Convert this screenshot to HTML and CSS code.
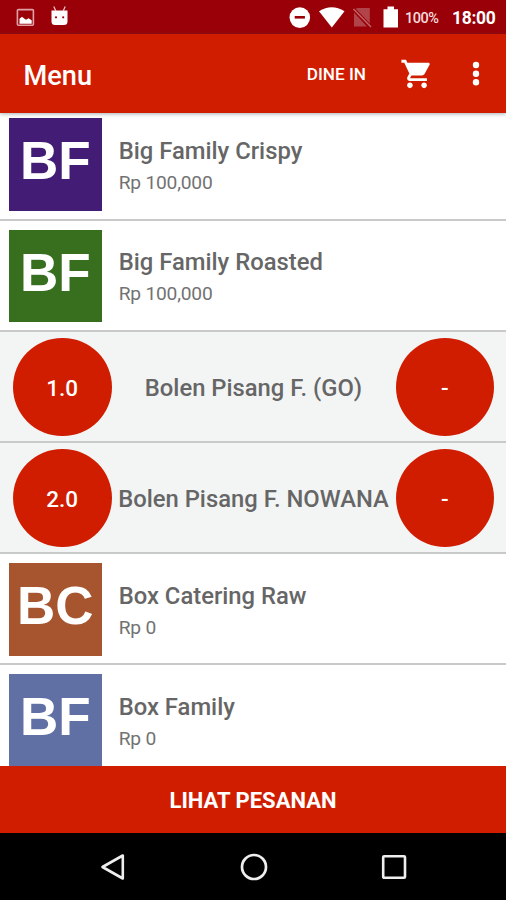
FILE: index.html
```html
<!DOCTYPE html>
<html lang="id">
<head>
<meta charset="utf-8">
<title>Menu</title>
<link rel="stylesheet" href="styles.css">
</head>
<body>
<div class="screen">
  <div class="status">
    <svg class="status-icons" width="506" height="34" viewBox="0 0 506 34" aria-hidden="true">
      <rect x="17.400" y="9.600" width="16" height="15.600" rx="1" fill="none" stroke="#e0a0a5" stroke-width="1.600"/>
      <path d="M19.500 23.800v-5l2.500-2 2.500 2 1.500 1 2.500-1.500 3.200 2v3.500z" fill="#fff"/>
      <path d="M51.500 10.500h16v11a3.500 3.500 0 0 1-3.500 3.500h-9a3.500 3.500 0 0 1-3.500-3.500z" fill="#fff"/>
      <path d="M53.800 6.500l2 4.500M65.200 6.500l-2 4.500" stroke="#f3cdd0" stroke-width="1.200"/>
      <circle cx="56" cy="17.300" r="1.100" fill="#990008"/><circle cx="63.200" cy="17.300" r="1.100" fill="#990008"/>
      <circle cx="299.800" cy="17.600" r="10.300" fill="#fff"/>
      <rect x="294.700" y="16" width="10.200" height="2.600" fill="#990008"/>
      <path d="M319 11.200Q331.800 3.200 344.500 11.200L331.800 27.500z" fill="#fff"/>
      <path d="M358.500 8h11.300v15.500L355.500 8.500zM354 12.500L367 26.500H354z" fill="#b0444a"/>
      <path d="M353.500 9l17.500 18" stroke="#c0656a" stroke-width="1.500"/>
      <path d="M383.500 9.300h4V6.500h6.500v2.800h4V27.600h-14.500z" fill="#fff"/>
    </svg>
    <span class="percent">100%</span>
    <span class="clock">18:00</span>
  </div>
  <header class="appbar">
    <h1 class="title">Menu</h1>
    <span class="mode">DINE IN</span>
    <svg class="cart" width="34" height="34" viewBox="0 0 24 24" fill="#fff"><path d="M7 18c-1.100 0-1.990.9-1.990 2S5.900 22 7 22s2-.9 2-2-.9-2-2-2zM1 2v2h2l3.600 7.590-1.350 2.450c-.16.280-.25.610-.25.960 0 1.100.9 2 2 2h12v-2H7.420c-.14 0-.25-.11-.25-.25l.03-.12.900-1.630h7.450c.75 0 1.410-.41 1.750-1.030l3.580-6.490c.08-.14.12-.31.12-.48 0-.55-.45-1-1-1H5.210l-.94-2H1zm16 16c-1.100 0-1.990.9-1.990 2s.89 2 1.990 2 2-.9 2-2-.9-2-2-2z"/></svg>
    <svg class="more" width="8" height="26" viewBox="0 0 8 26" fill="#fff"><circle cx="4" cy="4" r="3.200"/><circle cx="4" cy="12.700" r="3.200"/><circle cx="4" cy="21.300" r="3.200"/></svg>
  </header>
  <main class="list">
    <div class="row">
      <div class="tile purple">BF</div>
      <div class="info"><div class="name">Big Family Crispy</div><div class="price">Rp 100,000</div></div>
    </div>
    <div class="row">
      <div class="tile green">BF</div>
      <div class="info"><div class="name">Big Family Roasted</div><div class="price">Rp 100,000</div></div>
    </div>
    <div class="row picked">
      <div class="round">1.0</div><div class="name mid">Bolen Pisang F. (GO)</div><div class="round">-</div>
    </div>
    <div class="row picked">
      <div class="round">2.0</div><div class="name mid">Bolen Pisang F. NOWANA</div><div class="round">-</div>
    </div>
    <div class="row">
      <div class="tile brown">BC</div>
      <div class="info"><div class="name">Box Catering Raw</div><div class="price">Rp 0</div></div>
    </div>
    <div class="row">
      <div class="tile blue">BF</div>
      <div class="info"><div class="name">Box Family</div><div class="price">Rp 0</div></div>
    </div>
  </main>
  <div class="order">LIHAT PESANAN</div>
  <nav class="nav">
    <svg width="28" height="30" viewBox="0 0 28 30"><path d="M3.500 15L23.800 3.500V26.500z" fill="none" stroke="#eee" stroke-width="2.600" stroke-linejoin="round"/></svg>
    <svg width="28" height="30" viewBox="0 0 28 30"><circle cx="14" cy="15" r="12" fill="none" stroke="#eee" stroke-width="2.700"/></svg>
    <svg width="28" height="30" viewBox="0 0 28 30"><rect x="3.200" y="4.200" width="21.800" height="21.600" rx="1" fill="none" stroke="#eee" stroke-width="2.600"/></svg>
  </nav>
</div>
</body>
</html>
```
FILE: styles.css
```css
body { margin: 0; font-family: Roboto, "Liberation Sans", sans-serif; }
.screen { width: 506px; height: 900px; display: flex; flex-direction: column; overflow: hidden; background: #000; }
.status { position: relative; flex: none; height: 34px; background: #990008; color: #fff; display: flex; align-items: center; justify-content: flex-end; padding-right: 10.500px; box-sizing: border-box; }
.status-icons { position: absolute; left: 0; top: 0; }
.percent { font-size: 14.500px; letter-spacing: -0.500px; margin-right: 13.500px; padding-top: 2px; color: #f5dcdc; font-weight: 500; }
.clock { font-size: 17.500px; letter-spacing: -0.300px; font-weight: 700; padding-top: 1px; }
.appbar { position: relative; z-index: 1; flex: none; height: 79px; background: #d01d00; color: #fff; display: flex; align-items: center; padding: 0 26px 0 23.500px; box-sizing: border-box; box-shadow: 0 1px 4px rgba(60, 80, 90, .45); }
.title { margin: 0; flex: 1; font-size: 27.200px; font-weight: 500; line-height: 32px; padding-top: 4px; }
.mode { font-size: 17.200px; font-weight: 500; margin-right: 34px; padding-top: 1px; }
.cart { margin-right: 38px; }
.list { flex: none; height: 653px; overflow: hidden; background: #fff; display: flex; flex-direction: column; }
.row { flex: none; height: 111.200px; box-sizing: border-box; border-bottom: 2px solid #c8caca; display: flex; align-items: flex-start; padding: 9px 9px 0; background: #fff; }
.row:first-child { margin-top: -3.700px; }
.tile { flex: none; width: 92.500px; height: 92.500px; color: #fff; font: bold 53px/85px "Liberation Sans", Arial, sans-serif; text-align: center; }
.purple { background: #431d75; }
.green { background: #376f1e; }
.brown { background: #a6552e; }
.blue { background: #6070a5; }
.info { padding: 17.500px 0 0 17.200px; }
.name { color: #666; font-size: 23.800px; line-height: 30px; font-weight: 500; white-space: nowrap; }
.price { color: #727272; font-size: 19.200px; letter-spacing: -0.200px; line-height: 24px; padding-top: 5px; }
.picked { background: #f3f5f5; padding: 6px 12px 0 13px; align-items: flex-start; }
.round { flex: none; width: 98.500px; height: 98.500px; border-radius: 50%; background: #d01d00; color: #fff; text-align: center; font-size: 22.500px; line-height: 100px; font-weight: 500; }
.mid { flex: 1; display: flex; justify-content: center; line-height: 100px; }
.order { flex: none; height: 67px; background: #d01d00; color: #fff; text-align: center; font-size: 22px; line-height: 69px; font-weight: 700; }
.nav { flex: 1; background: #000; display: flex; align-items: center; justify-content: space-between; padding: 0 98px 0 99px; }
```
